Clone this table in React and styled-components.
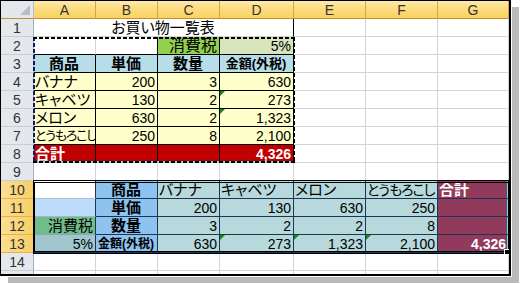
import React from "react";
import styled, { createGlobalStyle, css } from "styled-components";

const GlobalStyle = createGlobalStyle`
  *, *::before, *::after { box-sizing: border-box; }
  html, body { margin: 0; padding: 0; background: #fff; }
  body {
    font-family: "Liberation Sans", "Noto Sans CJK JP", sans-serif;
    font-feature-settings: "palt";
  }
`;

const BLK = "#000";
const GRID = "#d4d4d4";
const NAVY = "#1c3556";

const Page = styled.div`
  width: 522px;
  height: 284px;
  background: #fff;
`;

const Frame = styled.div`
  width: 511px;
  height: 276px;
  border-style: solid;
  border-color: #000;
  border-width: 1px 2px 2px 1px;
  overflow: hidden;
  box-shadow: 1px 1px 0 #fff, 8px 7px 0 #bababa;
`;

const Sheet = styled.div`
  position: relative;
  display: grid;
  grid-template-columns: 33px 62px 62px 62px 74px 72px 72px 71px;
  grid-auto-rows: 18px;
`;

const Corner = styled.div`
  position: relative;
  background: #e4e7ec;
  border-right: 1px solid #b3bcc8;
  border-bottom: 1px solid #c58f2c;

  &::after {
    content: "";
    position: absolute;
    right: 3px;
    bottom: 3px;
    border-style: solid;
    border-width: 0 0 10px 10px;
    border-color: transparent transparent #b6bdc7 transparent;
  }
`;

const ColHead = styled.div`
  display: flex;
  align-items: center;
  justify-content: center;
  background: linear-gradient(#feeab0, #fcdc7e 45%, #f9d262);
  border-right: 1px solid #d8a447;
  border-bottom: 1px solid #c58f2c;
  color: #333;
  font-size: 14px;
`;

const RowHead = styled.div`
  display: flex;
  align-items: center;
  justify-content: center;
  font-size: 14px;
  color: #333;
  background: ${(p) =>
    p.$active ? "linear-gradient(90deg, #fbdf92, #f8cf68)" : "#e4e7ec"};
  border-right: 1px solid ${(p) => (p.$active ? "#d9932e" : "#9fb0c3")};
  border-bottom: 1px solid ${(p) => (p.$active ? "#e9b14c" : "#c6ceda")};
`;

const justify = { left: "flex-start", right: "flex-end", center: "center" };

const Cell = styled.div`
  position: relative;
  display: flex;
  align-items: center;
  justify-content: ${(p) => justify[p.$align]};
  grid-column: span ${(p) => p.$span};
  padding: 0 2px 0 1px;
  background: ${(p) => p.$bg};
  color: ${(p) => p.$color};
  font-size: ${(p) => p.$size}px;
  font-weight: ${(p) => (p.$bold ? 700 : 400)};
  letter-spacing: ${(p) => p.$track}px;
  line-height: 1;
  white-space: nowrap;
  overflow: hidden;
  border-right: 1px solid ${(p) => p.$r};
  border-bottom: 1px solid ${(p) => p.$b};
  ${(p) =>
    p.$edge &&
    css`
      box-shadow: inset -1px 0 0 #55e6ee;
    `}
  ${(p) =>
    p.$flag &&
    css`
      &::before {
        content: "";
        position: absolute;
        left: 0;
        top: 0;
        border-style: solid;
        border-width: 5px 5px 0 0;
        border-color: #128a12 transparent transparent transparent;
      }
    `}
`;

const Marquee = styled.div`
  position: absolute;
  left: 32px;
  top: 36px;
  width: 262px;
  height: 126px;
  pointer-events: none;
  background:
    repeating-linear-gradient(90deg, #000 0 4px, transparent 4px 6px) top left / 100% 2px no-repeat,
    repeating-linear-gradient(90deg, #000 0 4px, #5fe0ea 4px 6px) bottom left / 100% 2px no-repeat,
    repeating-linear-gradient(180deg, #111a5a 0 4px, transparent 4px 6px) top left / 2px 100% no-repeat,
    repeating-linear-gradient(180deg, #000 0 4px, transparent 4px 6px) top right / 2px 100% no-repeat;
`;

const Selection = styled.div`
  position: absolute;
  left: 32px;
  top: 179px;
  width: 477px;
  height: 74px;
  pointer-events: none;
  border-top: 3px double #000;
  border-bottom: 3px double #000;
  border-left: 2px solid #000;
`;

const FillHandle = styled.div`
  position: absolute;
  right: 0;
  bottom: -4px;
  width: 6px;
  height: 6px;
  background: #000;
  border: 1px solid #fff;
`;

const columns = ["A", "B", "C", "D", "E", "F", "G"];

const yellow = "#ffffcc";
const head1 = "#b7dee8";
const red = "#c00000";
const blue2 = "#8dc3ee";
const teal = "#b7d9dc";
const wine = "#923a5b";

const box = { r: BLK, b: BLK };
const box2 = { r: NAVY, b: NAVY };
const empty = () => ({});

// name, price, qty, amount, error flag, and a tighter setting for the long name
const items = [
  ["バナナ", "200", "3", "630", false],
  ["キャベツ", "130", "2", "273", true],
  ["メロン", "630", "2", "1,323", true],
  ["とうもろこし", "250", "8", "2,100", false, true],
];

const itemRow = ([name, price, qty, amount, flag, long]) => [
  {
    text: name,
    bg: yellow,
    ...(long ? { size: 13, track: -1.2 } : {}),
    ...box,
  },
  { text: price, num: true, align: "right", bg: yellow, ...box },
  { text: qty, num: true, align: "right", bg: yellow, ...box },
  { text: amount, num: true, align: "right", bg: yellow, flag, ...box },
  {},
  {},
  {},
];

const wineCell = (o = {}) => ({
  bg: wine,
  color: "#fff",
  r: BLK,
  b: NAVY,
  edge: true,
  ...o,
});

const rows = [
  [{ text: "お買い物一覧表", span: 4, align: "center", r: BLK }, {}, {}, {}],
  [
    { b: BLK },
    { r: BLK, b: BLK },
    { text: "消費税", size: 16, bg: "#92d050", align: "right", ...box },
    { text: "5%", num: true, bg: "#d7e4bc", align: "right", ...box },
    {},
    {},
    {},
  ],
  [
    ...["商品", "単価", "数量"].map((t) => ({
      text: t,
      bg: head1,
      bold: true,
      align: "center",
      ...box,
    })),
    { text: "金額(外税)", size: 13, bg: head1, bold: true, align: "center", ...box },
    {},
    {},
    {},
  ],
  ...items.map(itemRow),
  [
    { text: "合計", bg: red, color: "#fff", bold: true, ...box },
    { bg: red, ...box },
    { bg: red, ...box },
    { text: "4,326", num: true, bold: true, color: "#fff", align: "right", bg: red, ...box },
    {},
    {},
    {},
  ],
  [{}, ...Array.from({ length: 6 }, () => ({ b: NAVY }))],
  [
    { r: NAVY, b: "#a9c2d6" },
    { text: "商品", bg: blue2, bold: true, align: "center", ...box2 },
    ...items.map(([name, , , , , long]) => ({
      text: name,
      bg: teal,
      ...(long ? { size: 14, track: -1 } : {}),
      ...box2,
    })),
    wineCell({ text: "合計", bold: true }),
  ],
  [
    { bg: "#bddcfb", r: NAVY, b: "#9db7c8" },
    { text: "単価", bg: blue2, bold: true, align: "center", ...box2 },
    ...items.map(([, price]) => ({ text: price, num: true, align: "right", bg: teal, ...box2 })),
    wineCell(),
  ],
  [
    { text: "消費税", bg: "#70bd8b", align: "right", r: NAVY, b: "#86a7b3" },
    { text: "数量", bg: blue2, bold: true, align: "center", ...box2 },
    ...items.map(([, , qty]) => ({ text: qty, num: true, align: "right", bg: teal, ...box2 })),
    wineCell(),
  ],
  [
    { text: "5%", num: true, bg: "#a0c7cf", align: "right", r: NAVY, b: NAVY },
    { text: "金額(外税)", size: 12, bg: blue2, bold: true, align: "center", ...box2 },
    ...items.map(([, , , amount], i) => ({
      text: amount,
      num: true,
      align: "right",
      bg: teal,
      flag: i > 0,
      ...box2,
    })),
    wineCell({ text: "4,326", num: true, bold: true, align: "right" }),
  ],
  columns.map(empty),
  columns.map(empty),
];

const App = () => (
  <Page>
    <GlobalStyle />
    <Frame>
      <Sheet>
        <Corner />
        {columns.map((c) => (
          <ColHead key={c}>{c}</ColHead>
        ))}
        {rows.map((row, i) => (
          <React.Fragment key={i}>
            {/* row 15 only peeks in under the frame edge, so no label */}
            <RowHead $active={i >= 9 && i <= 12}>{i < 14 ? i + 1 : ""}</RowHead>
            {row.map((cell, j) => (
              <Cell
                key={j}
                $span={cell.span || 1}
                $align={cell.align || "left"}
                $bg={cell.bg || "#fff"}
                $color={cell.color || "#000"}
                $size={cell.size || (cell.num ? 14 : 15)}
                $track={cell.track || 0}
                $bold={cell.bold}
                $r={cell.r || GRID}
                $b={cell.b || GRID}
                $edge={cell.edge}
                $flag={cell.flag}
              >
                {cell.text}
              </Cell>
            ))}
          </React.Fragment>
        ))}
        <Marquee />
        <Selection>
          <FillHandle />
        </Selection>
      </Sheet>
    </Frame>
  </Page>
);

export default App;
